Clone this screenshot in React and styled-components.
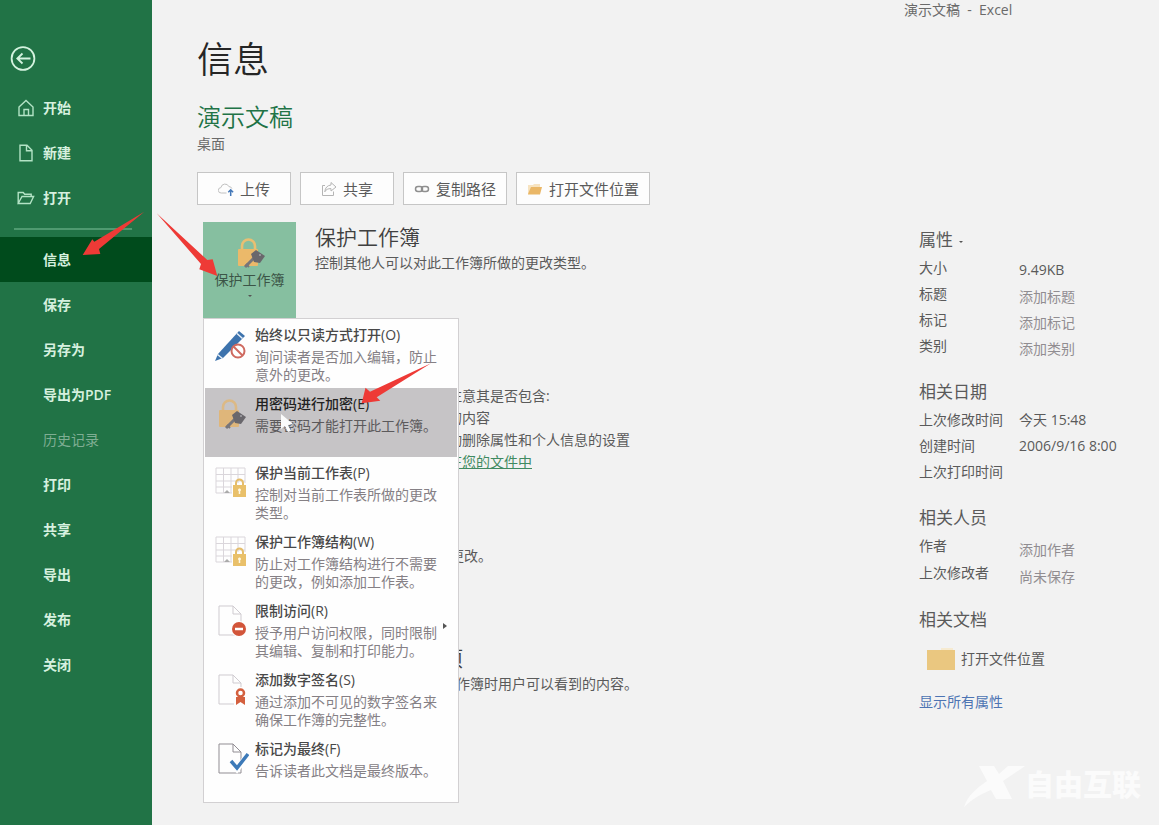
import React from "react";
import styled, { createGlobalStyle } from "styled-components";

const GlobalStyle = createGlobalStyle`
  * {
    box-sizing: border-box;
    margin: 0;
    padding: 0;
  }
  body {
    background: #f2f2f2;
    color: #5a5a5a;
    font-family: "Open Sans", "Noto Sans CJK SC", sans-serif;
    font-size: 14px;
    line-height: 22px;
  }
  button, input {
    font: inherit;
    color: inherit;
    border: 0;
    background: none;
  }
`;

const Page = styled.div`
  position: relative;
  display: flex;
  min-height: 100vh;
  overflow: hidden;
`;

// sidebar
const Sidebar = styled.nav`
  flex: 0 0 152px;
  padding-top: 45px;
  background: #217346;
`;

const BackButton = styled.button`
  display: block;
  width: 26px;
  height: 26px;
  margin: 0 0 14px 10px;
`;

const NavItem = styled.button`
  display: flex;
  align-items: center;
  width: 100%;
  height: 45px;
  padding-left: 17px;
  background: ${(p) => (p.$active ? "#004b1c" : "transparent")};
  color: ${(p) => (p.disabled ? "#7fae93" : "#d6f0df")};
  font-weight: ${(p) => (p.disabled ? 400 : 600)};
  text-align: left;
`;

const NavIcon = styled.span`
  display: flex;
  width: 26px;
`;

const NavDivider = styled.hr`
  height: 2px;
  margin: 8px 20px 7px 14px;
  border: 0;
  background: #4f9a70;
`;

// main column
const Main = styled.main`
  flex: 1;
  min-width: 0;
  padding: 36px 0 22px 45px;
`;

const PageTitle = styled.h1`
  color: #262626;
  font-size: 36px;
  font-weight: 350;
  line-height: 48px;
`;

const FileName = styled.h2`
  margin-top: 17px;
  color: #217346;
  font-size: 24px;
  font-weight: 350;
  line-height: 32px;
`;

const FilePath = styled.p`
  color: #6a6a6a;
`;

const Toolbar = styled.div`
  display: flex;
  gap: 9px;
  margin-top: 17px;
`;

const ToolButton = styled.button`
  display: flex;
  align-items: center;
  justify-content: center;
  gap: 6px;
  min-width: 94px;
  height: 33px;
  padding: 0 10px;
  border: 1px solid #c6c6c6;
  background: #fdfdfd;
  font-size: 15px;
  white-space: nowrap;
`;

const ProtectRow = styled.section`
  display: flex;
  gap: 19px;
  margin: 17px 0 0 6px;
`;

const MenuAnchor = styled.div`
  position: relative;
  flex: none;
`;

const ProtectButton = styled.button`
  display: flex;
  flex-direction: column;
  align-items: center;
  width: 93px;
  height: 96px;
  padding-top: 15px;
  background: #86bfa0;
  color: #3c5547;
`;

const Caret = styled.span`
  width: 0;
  margin-top: 4px;
  border: 2px solid transparent;
  border-top-color: #555;
  border-bottom: 0;
`;

const SectionTitle = styled.h3`
  color: #404040;
  font-size: 21px;
  font-weight: 350;
  line-height: 30px;
`;

const Notes = styled.section`
  margin: ${(p) => p.$top}px 0 0 ${(p) => p.$indent}px;
  white-space: nowrap;
`;

const NoteLink = styled.a`
  color: #3f8a61;
  text-decoration: underline;
`;

// drop-down menu
const Menu = styled.ul`
  position: absolute;
  top: 100%;
  left: 0;
  z-index: 2;
  width: 256px;
  padding: 0 1px;
  border: 1px solid #d2d0d2;
  background: #fefefe;
  list-style: none;
`;

const MenuButton = styled.button`
  display: flex;
  width: 100%;
  height: 69px;
  padding: 6px 0 0 10px;
  background: ${(p) => (p.$active ? "#c6c4c6" : "transparent")};
  color: ${(p) => (p.$active ? "#5c5a5c" : "#858085")};
  text-align: left;
`;

const MenuIcon = styled.span`
  flex: 0 0 40px;
  padding-top: 4px;
`;

const MenuText = styled.span`
  flex: 0 0 184px;
  line-height: 18px;
`;

const MenuTitle = styled.strong`
  display: block;
  margin-bottom: 3px;
  color: ${(p) => (p.$active ? "#222" : "#484848")};
  font-weight: 500;
  line-height: 20px;
`;

const SubmenuCaret = styled.span`
  align-self: flex-start;
  margin: 22px 0 0 4px;
  border: 3px solid transparent;
  border-left: 4px solid #555;
  border-right: 0;
`;

// right column
const Aside = styled.aside`
  flex: 0 0 255px;
  min-width: 0;
`;

const WindowTitle = styled.p`
  margin-bottom: 208px;
  line-height: 20px;
  color: #6a6a6a;
  white-space: pre;
`;

const Group = styled.section`
  margin: 0 0 19px 15px;
`;

const GroupTitle = styled.h4`
  display: flex;
  align-items: center;
  gap: 6px;
  margin-bottom: 5px;
  font-size: 17px;
  font-weight: 400;
  line-height: 24px;
`;

const Field = styled.div`
  display: flex;
  align-items: flex-start;
  height: ${(p) => (p.$loose ? 27 : 26)}px;
`;

const FieldLabel = styled.label`
  flex: 0 0 100px;
  line-height: 22px;
`;

const FieldValue = styled.output`
  line-height: ${(p) => (p.$level ? 22 : 26)}px;
`;

const FieldInput = styled.input`
  flex: 1;
  min-width: 0;
  height: ${(p) => (p.$loose ? 28 : 26)}px;
  &::placeholder {
    color: #918d91;
    opacity: 1;
  }
`;

const FolderButton = styled.button`
  display: flex;
  align-items: center;
  gap: 6px;
  margin: 15px 0 0 8px;
`;

const AllLink = styled.a`
  display: inline-block;
  margin-top: 20px;
  color: #4d74b3;
  text-decoration: none;
`;

// layers over the page
const Arrows = styled.svg`
  position: absolute;
  top: 0;
  left: 0;
  z-index: 3;
  pointer-events: none;
`;

const Watermark = styled.div`
  position: absolute;
  right: 18px;
  bottom: 18px;
  display: flex;
  align-items: center;
  color: #fbfbfb;
  font-size: 29px;
  font-weight: 900;
  line-height: 44px;
  pointer-events: none;
`;

// icons
const HomeIcon = () => (
  <svg width="18" height="18" viewBox="0 0 18 18" fill="none" stroke="#b3e3c5" strokeWidth="1.4">
    <path d="M2 8 9 1.5 16 8v8.500H2z M7 16.500V10.500h4.500v6" />
  </svg>
);

const NewIcon = () => (
  <svg width="18" height="18" viewBox="0 0 18 18" fill="none" stroke="#b3e3c5" strokeWidth="1.4">
    <path d="M3 1.2h7l5 5v10.6H3z M9.5 1.5v5.2H15" />
  </svg>
);

const OpenIcon = () => (
  <svg width="18" height="18" viewBox="0 0 18 18" fill="none" stroke="#b3e3c5" strokeWidth="1.4">
    <path d="M1.2 14.5V3.5h5l1.5 1.8h6.5V7.5 M1.2 14.5 5 7.5h11.6l-3.4 7z" />
  </svg>
);

const BackIcon = () => (
  <svg width="26" height="26" viewBox="0 0 26 26" fill="none" stroke="#d4f3df" strokeWidth="1.8">
    <circle cx="13" cy="13.5" r="11.4" />
    <path d="M20.5 13.5H7.5 M12.5 8.5l-5.2 5 5.2 5" />
  </svg>
);

const UploadIcon = () => (
  <svg width="16" height="16" viewBox="0 0 16 16" fill="none">
    <path d="M8.5 12H3.2a2.7 2.7 0 0 1-.3-5.4 4.2 4.2 0 0 1 8-1 3 3 0 0 1 3 2" stroke="#c0c0c0" />
    <path d="M12.7 15V9 M10.3 11.2l2.4-2.4 2.4 2.4" stroke="#4478b8" strokeWidth="1.5" />
  </svg>
);

const ShareIcon = () => (
  <svg width="16" height="16" viewBox="0 0 16 16" fill="none" stroke="#b5b5b5">
    <path d="M4 4.5H1.5v10h11v-4" />
    <path d="M10 1.5 15 6l-5 4V7.6c-3 0-5 .8-6.2 3.2C4 6.8 6.5 4.3 10 4z" />
  </svg>
);

const LinkIcon = () => (
  <svg width="16" height="16" viewBox="0 0 16 16" fill="none" stroke="#8f8f8f" strokeWidth="1.5">
    <rect x="1.5" y="5.5" width="7" height="5" rx="2.5" />
    <rect x="7.5" y="5.5" width="7" height="5" rx="2.5" />
  </svg>
);

const SmallFolderIcon = () => (
  <svg width="16" height="16" viewBox="0 0 16 16">
    <path d="M1 13V4h5l1-1h6v3z" fill="#f7e3c0" />
    <path d="M1 13 4 6h11l-2 7.5H1z" fill="#eab767" />
  </svg>
);

const FolderIcon = () => (
  <svg width="28" height="24" viewBox="0 0 28 24">
    <path d="M14 3V1h12v2z" fill="#f6ead0" />
    <path d="M0 3h28v20H0z" fill="#eac780" />
  </svg>
);

const LockKeyIcon = ({ muted }) => (
  <svg width="32" height="32" viewBox="0 0 32 32">
    <path d="M8 13V9a6.5 6.5 0 0 1 13 0v4" fill="none" stroke={muted ? "#dcb985" : "#e9bf72"} strokeWidth="2.6" />
    <rect x="4" y="12" width="20" height="17" rx="1" fill={muted ? "#dfb67a" : "#ebb96a"} />
    <path d="M11 30 21 20" stroke="#77757a" strokeWidth="3" />
    <path d="M12 27l3 3" stroke="#77757a" strokeWidth="2" />
    <path d="M17 17l5-4 9 6-5 7-6-1z" fill="#69676c" />
    <circle cx="26" cy="18" r="1" fill="#a5a3a8" />
  </svg>
);

const PencilIcon = () => (
  <svg width="32" height="34" viewBox="0 0 32 34">
    <path d="M0 32 3 25 24 2l6 5L8 29z" fill="#3d73ad" />
    <path d="M2.500 25.500 7.500 29.500 M22 4.500l5.500 5" stroke="#e8f0f8" strokeWidth="1.500" />
    <circle cx="23" cy="22" r="6.500" fill="#fff" stroke="#cf6a60" strokeWidth="2" />
    <path d="M18.500 17.500l9 9" stroke="#cf6a60" strokeWidth="2" />
  </svg>
);

const SheetLockIcon = () => (
  <svg width="32" height="32" viewBox="0 0 32 32" fill="none">
    <path d="M1 1h29v25H1z M8.5 1v25 M16 1v25 M23 1v25 M1 7.5h29 M1 14h29 M1 20h29" stroke="#dad6db" />
    <path d="M9 26l3-3 3 3z" fill="#aaa" />
    <path d="M17 16h15v16H17z" fill="#fefefe" />
    <path d="M21 19v-3a3.5 3.5 0 0 1 7 0v3" stroke="#e5bd6b" strokeWidth="2" />
    <rect x="18" y="18" width="13" height="12" fill="#e9c06a" />
    <path d="M24.5 21.500v5.500 M23 23h3" stroke="#fff7e2" strokeWidth="1.5" />
  </svg>
);

const DocIcon = ({ dark, children }) => (
  <svg width="34" height="34" viewBox="0 0 34 34" fill="none">
    <path d="M4 1h14l8 8v21H4z M18 1v8h8" stroke={dark ? "#918d93" : "#cfcbd0"} />
    {children}
  </svg>
);

const NAV_TOP = [
  { label: "开始", icon: <HomeIcon /> },
  { label: "新建", icon: <NewIcon /> },
  { label: "打开", icon: <OpenIcon /> },
];

const NAV_MAIN = ["信息", "保存", "另存为", "导出为PDF", "历史记录", "打印", "共享", "导出", "发布", "关闭"];

const MENU = [
  { title: "始终以只读方式打开(O)", text: "询问读者是否加入编辑，防止意外的更改。", icon: <PencilIcon /> },
  { title: "用密码进行加密(E)", text: "需要密码才能打开此工作簿。", icon: <LockKeyIcon muted />, active: true },
  { title: "保护当前工作表(P)", text: "控制对当前工作表所做的更改类型。", icon: <SheetLockIcon /> },
  { title: "保护工作簿结构(W)", text: "防止对工作簿结构进行不需要的更改，例如添加工作表。", icon: <SheetLockIcon /> },
  {
    title: "限制访问(R)",
    text: "授予用户访问权限，同时限制其编辑、复制和打印能力。",
    submenu: true,
    icon: (
      <DocIcon>
        <circle cx="24" cy="24" r="8" fill="#fefefe" />
        <circle cx="24" cy="24" r="7" fill="#d2553a" />
        <path d="M20 24h8" stroke="#fff" strokeWidth="2.5" />
      </DocIcon>
    ),
  },
  {
    title: "添加数字签名(S)",
    text: "通过添加不可见的数字签名来确保工作簿的完整性。",
    icon: (
      <DocIcon>
        <path d="M19 13h13v19H19z" fill="#fefefe" />
        <path d="M21 23h9v8l-4.5-3-4.5 3z" fill="#d4603f" />
        <circle cx="25.5" cy="19" r="3.5" fill="#fff" stroke="#d4603f" strokeWidth="2.5" />
      </DocIcon>
    ),
  },
  {
    title: "标记为最终(F)",
    text: "告诉读者此文档是最终版本。",
    icon: (
      <DocIcon dark>
        <path d="M16 19l6 7L33 12" stroke="#fefefe" strokeWidth="6" />
        <path d="M16 18l6 7L33 11" stroke="#3d7ab8" strokeWidth="3.5" />
      </DocIcon>
    ),
  },
];

const EditField = ({ id, label, hint, loose }) => (
  <Field $loose={loose}>
    <FieldLabel htmlFor={id}>{label}</FieldLabel>
    <FieldInput id={id} placeholder={hint} $loose={loose} />
  </Field>
);

const ReadField = ({ id, label, value, level }) => (
  <Field>
    <FieldLabel htmlFor={id}>{label}</FieldLabel>
    <FieldValue id={id} $level={level}>{value}</FieldValue>
  </Field>
);

export default function App() {
  return (
    <Page>
      <GlobalStyle />
      <Sidebar>
        <BackButton aria-label="返回"><BackIcon /></BackButton>
        {NAV_TOP.map((item) => (
          <NavItem key={item.label}>
            <NavIcon>{item.icon}</NavIcon>
            {item.label}
          </NavItem>
        ))}
        <NavDivider />
        {NAV_MAIN.map((label) => (
          <NavItem key={label} $active={label === "信息"} disabled={label === "历史记录"}>
            <NavIcon />
            {label}
          </NavItem>
        ))}
      </Sidebar>

      <Main>
        <PageTitle>信息</PageTitle>
        <FileName>演示文稿</FileName>
        <FilePath>桌面</FilePath>
        <Toolbar>
          <ToolButton><UploadIcon />上传</ToolButton>
          <ToolButton><ShareIcon />共享</ToolButton>
          <ToolButton><LinkIcon />复制路径</ToolButton>
          <ToolButton><SmallFolderIcon />打开文件位置</ToolButton>
        </Toolbar>

        <ProtectRow>
          <MenuAnchor>
            <ProtectButton>
              <LockKeyIcon />
              保护工作簿
              <Caret />
            </ProtectButton>
            <Menu>
              {MENU.map((item) => (
                <li key={item.title}>
                  <MenuButton $active={item.active}>
                    <MenuIcon>{item.icon}</MenuIcon>
                    <MenuText>
                      <MenuTitle $active={item.active}>{item.title}</MenuTitle>
                      {item.text}
                    </MenuText>
                    {item.submenu && <SubmenuCaret />}
                  </MenuButton>
                </li>
              ))}
            </Menu>
          </MenuAnchor>
          <div>
            <SectionTitle>保护工作簿</SectionTitle>
            <p>控制其他人可以对此工作簿所做的更改类型。</p>
          </div>
        </ProtectRow>

        <Notes $top={67} $indent={251}>
          <p>注意其是否包含:</p>
          <p>的内容</p>
          <p>动删除属性和个人信息的设置</p>
          <NoteLink href="#">在您的文件中</NoteLink>
        </Notes>
        <Notes $top={72} $indent={253}>
          <p>更改。</p>
        </Notes>
        <Notes $top={76} $indent={245}>
          <SectionTitle>项</SectionTitle>
          <p>工作簿时用户可以看到的内容。</p>
        </Notes>
      </Main>

      <Aside>
        <WindowTitle>{"演示文稿  -  Excel"}</WindowTitle>
        <Group>
          <GroupTitle>属性 <Caret /></GroupTitle>
          <ReadField id="size" label="大小" value="9.49KB" />
          <EditField id="title" label="标题" hint="添加标题" />
          <EditField id="tags" label="标记" hint="添加标记" />
          <EditField id="category" label="类别" hint="添加类别" />
        </Group>
        <Group>
          <GroupTitle>相关日期</GroupTitle>
          <ReadField id="modified" label="上次修改时间" value="今天 15:48" level />
          <ReadField id="created" label="创建时间" value="2006/9/16 8:00" level />
          <ReadField id="printed" label="上次打印时间" value="" level />
        </Group>
        <Group>
          <GroupTitle>相关人员</GroupTitle>
          <EditField id="author" label="作者" hint="添加作者" loose />
          <EditField id="editor" label="上次修改者" hint="尚未保存" loose />
        </Group>
        <Group>
          <GroupTitle>相关文档</GroupTitle>
          <FolderButton><FolderIcon />打开文件位置</FolderButton>
          <AllLink href="#">显示所有属性</AllLink>
        </Group>
      </Aside>

      <Arrows width="460" height="440" viewBox="0 0 460 440" aria-hidden="true">
        <g fill="#ee3a36">
          <path d="M82.7 255 92.3 239.3 94.3 241.7 144.3 211.7 99 249 100.3 254z" />
          <path d="M217.3 276 199.3 269.3 201 264 156.7 213.3 207.3 260 212.7 259.3z" />
          <path d="M361.7 403.3 365.5 387.7 370 391.7 431 363.3 376.7 397.3 380.3 400.7z" />
        </g>
        <path d="M281 414v15l4-3 3 6 3-1-3-6 5-1z" fill="#fbfbfb" />
      </Arrows>

      <Watermark>
        <svg width="62" height="44" viewBox="0 0 62 44" fill="#fbfbfb">
          <path d="M16 3h15l5 8 9-8h17L40 18l9 18H33l-5-9C18 31 9 36 1 44 5 32 14 25 24 18z" />
        </svg>
        自由互联
      </Watermark>
    </Page>
  );
}
